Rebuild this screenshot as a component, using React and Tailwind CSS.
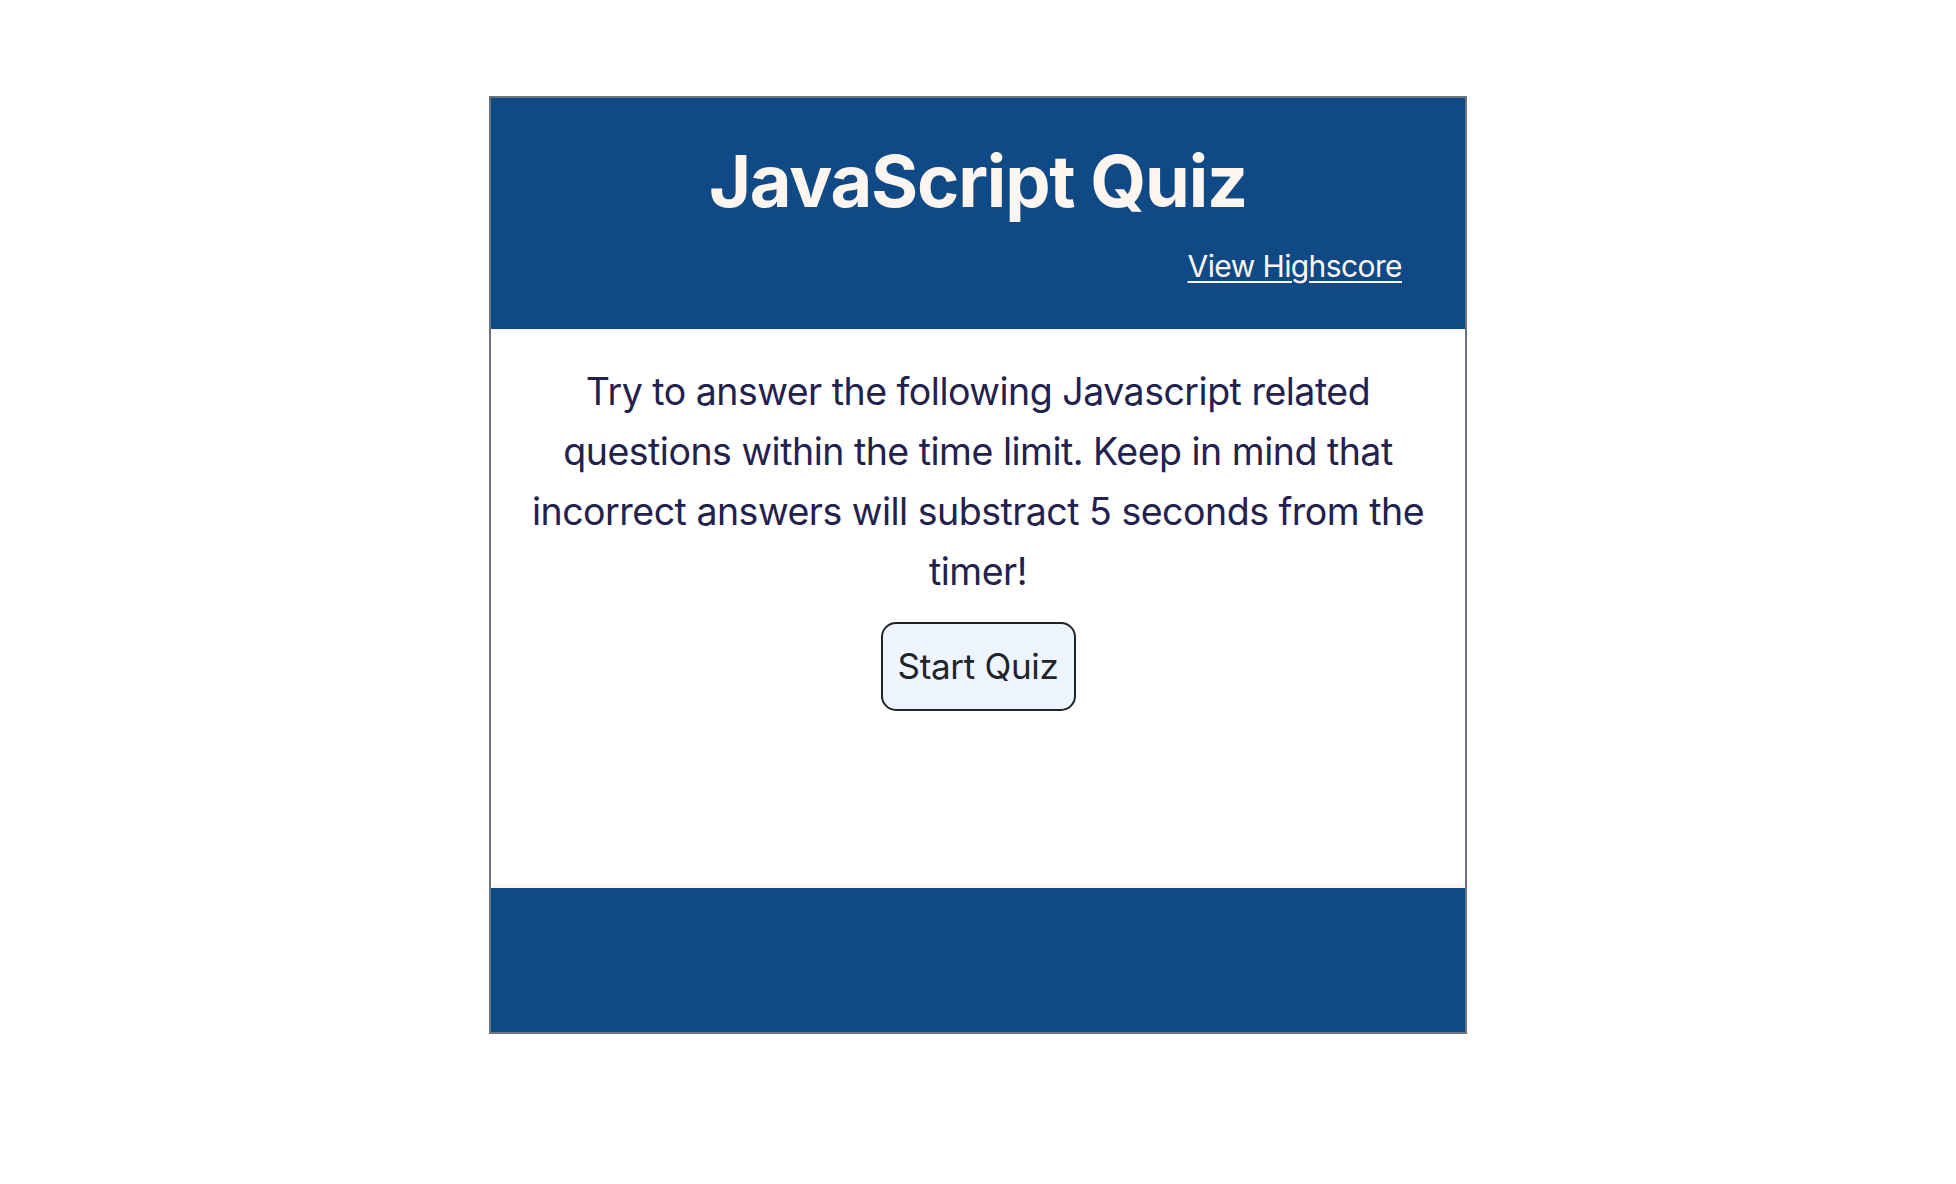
export default function App() {
  return (
    <div className="min-h-screen bg-white pt-[96px]" style={{ fontFamily: 'Inter, "Noto Sans", sans-serif' }}>
      <div className="mx-auto w-[978px] border-2 border-[#6b7280] flex flex-col">
        <header className="h-[231px] bg-[#0f4a87] flex flex-col">
          <h1 className="text-center text-[72px] font-bold leading-none text-[#fdf5ef] pt-[47px] tracking-[-1.2px]">
            JavaScript Quiz
          </h1>
          <div className="flex justify-end pr-[63px] pt-[34px]">
            <a href="#" className="text-[30px] leading-none text-[#fdf5ef] underline underline-offset-[4px] decoration-[2px] tracking-[-0.6px]">
              View Highscore
            </a>
          </div>
        </header>
        <main className="h-[555px] bg-white flex flex-col items-center pt-[33px] px-[34px]">
          <p className="text-center text-[37.5px] leading-[60px] text-[#23214d] tracking-[-0.5px]">
            Try to answer the following Javascript related questions within the time limit. Keep in mind that incorrect answers will substract 5 seconds from the timer!
          </p>
          <button className="mt-[20px] w-[195px] h-[89px] rounded-[15px] border-2 border-[#1f2428] bg-[#eef5ff] text-[35px] text-[#212529] tracking-[-0.3px]">
            Start Quiz
          </button>
        </main>
        <footer className="h-[148px] bg-[#0f4a87] border-t-4 border-[#fdf5ef]"></footer>
      </div>
    </div>
  );
}
